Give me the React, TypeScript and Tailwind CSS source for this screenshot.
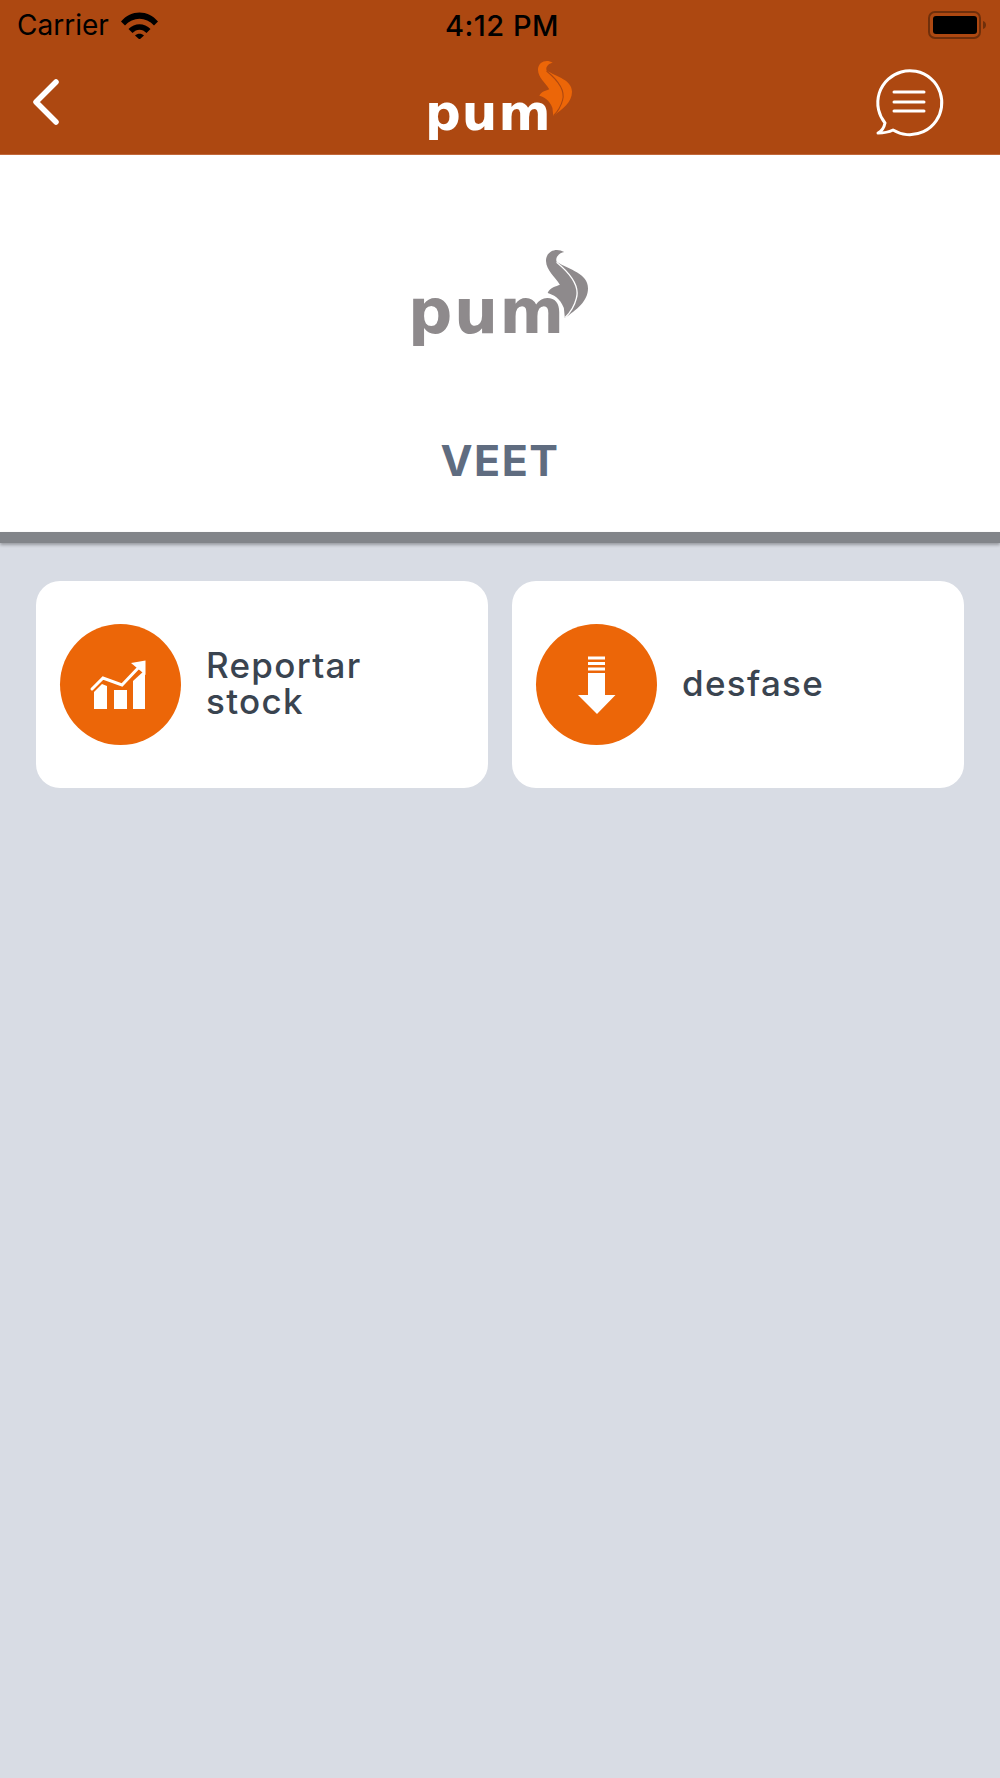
import React from "react";

function Flame({ className, line }: { className: string; line: string }) {
  return (
    <svg viewBox="498 60 127 205" className={className}>
      <path
        d="M553 66C530 52 500 62 498 90C497 120 525 140 540 165C530 170 510 172 503 190C520 195 540 205 552 235L555 265C590 240 625 215 625 175C625 130 570 120 530 95C525 80 540 68 553 66Z"
        fill="currentColor"
      />
      <path d="M530 97C570 130 600 170 590 205C585 225 570 250 556 264" fill="none" stroke={line} strokeWidth="4" />
    </svg>
  );
}

function StatusBar() {
  return (
    <div className="flex h-[50px] items-center justify-between pl-[17px] pr-[13px] text-black">
      <div className="flex w-[200px] items-center gap-[12px]">
        <span className="text-[28px] leading-none">Carrier</span>
        <svg viewBox="0 0 37 27" className="h-[27px] w-[37px] shrink-0">
          <path d="M0 9.5C10-2.5 27-2.5 37 9.5L33 13.5C25 4.5 12 4.5 4 13.5Z" fill="black" />
          <path d="M7.5 17C13.500 10.500 23.500 10.500 29.500 17L25.500 21C21.500 16.500 15.500 16.500 11.500 21Z" fill="black" />
          <path d="M14 23.500C16.500 21 20.500 21 23 23.500L18.500 27.500Z" fill="black" />
        </svg>
      </div>
      <span className="text-[29px] font-medium leading-none tracking-[0.5px]">4:12 PM</span>
      <div className="flex w-[200px] justify-end">
        <svg viewBox="0 0 59 28" className="h-[28px] w-[59px]">
          <rect x="1" y="1" width="51" height="26" rx="6" fill="none" stroke="#6f2f0b" strokeWidth="2" />
          <rect x="5" y="5" width="44" height="18" rx="3" fill="black" />
          <path d="M55 10C57.500 11 58 12.500 58 14C58 15.500 57.500 17 55 18Z" fill="#6f2f0b" />
        </svg>
      </div>
    </div>
  );
}

function NavBar() {
  return (
    <div className="flex h-[104px] items-start justify-between">
      <div className="w-[130px] pl-[32px] pt-[29px]">
        <svg viewBox="0 0 27 46" className="h-[46px] w-[27px]">
          <path d="M24 3L4 23L24 43" fill="none" stroke="white" strokeWidth="5.500" strokeLinecap="round" strokeLinejoin="round" />
        </svg>
      </div>
      <div className="relative mt-[10px] h-[90px] w-[144px] pt-[23px]">
        <span className="-ml-[3px] block font-['DejaVu_Sans',sans-serif] text-[50px] font-bold leading-[60px] tracking-[1px] text-white">
          pum
        </span>
        <Flame className="absolute left-[110px] top-0 h-[57px] w-[34px] text-[#ec6608]" line="#ad4811" />
      </div>
      <div className="flex w-[130px] justify-end pr-[55px] pt-[17px]">
        <svg viewBox="875 67 70 70" className="h-[70px] w-[70px] shrink-0">
          <path
            d="M885 123A32 32 0 1 1 893 130C889 132 884 133 878 133C882 131 884 128 885 123Z"
            fill="none"
            stroke="white"
            strokeWidth="3"
            strokeLinejoin="round"
          />
          <path d="M894 92H924M894 102H924M894 111H924" stroke="white" strokeWidth="3" strokeLinecap="round" />
        </svg>
      </div>
    </div>
  );
}

function ChartIcon() {
  return (
    <svg viewBox="60 624 121 121" className="h-full w-full">
      <path d="M94 692L102 684L107 686V709H94Z" fill="white" />
      <rect x="114" y="690" width="13" height="19" fill="white" />
      <path d="M133 681L145 670V709H133Z" fill="white" />
      <path d="M92 689L103 678L122 685L141 665" fill="none" stroke="white" strokeWidth="3" strokeLinecap="round" />
      <path d="M131 663L145.500 660.500V675Z" fill="white" />
    </svg>
  );
}

function ArrowIcon() {
  return (
    <svg viewBox="536 624 121 121" className="h-full w-full">
      <rect x="588" y="656.500" width="17" height="3" fill="white" />
      <rect x="588" y="662" width="17" height="3" fill="white" />
      <rect x="588" y="667.500" width="17" height="3" fill="white" />
      <path d="M588 673H605V695H615.500L597 714L578 695H588Z" fill="white" />
    </svg>
  );
}

function ActionCard({ icon, label }: { icon: React.ReactNode; label: React.ReactNode }) {
  return (
    <div className="flex h-[207px] items-center gap-[25px] rounded-[24px] bg-white pl-[24px]">
      <div className="h-[121px] w-[121px] shrink-0 rounded-full bg-[#ec6608]">{icon}</div>
      <span className="pb-[3px] text-[35px] font-medium leading-[36px] tracking-[1.3px] text-[#3a4450]">{label}</span>
    </div>
  );
}

export default function App() {
  return (
    <div className="flex min-h-[1778px] flex-col bg-[#d8dce4] font-['Inter',sans-serif]">
      <header className="h-[155px] border-b border-[#c2683a] bg-[#ad4811]">
        <StatusBar />
        <NavBar />
      </header>

      <section className="flex h-[377px] flex-col items-center bg-white">
        <div className="relative mt-[95px] h-[100px] w-[176px] pt-[28px]">
          <span className="-ml-[4px] block font-['DejaVu_Sans',sans-serif] text-[62px] font-bold leading-[68px] tracking-[1.5px] text-[#8e8a8c]">
            pum
          </span>
          <Flame className="absolute left-[134px] top-0 h-[68px] w-[42px] text-[#8e8a8c]" line="white" />
        </div>
        <span className="mt-[85px] text-[43px] font-bold leading-[50px] tracking-[1.5px] text-[#5f6c80]">VEET</span>
      </section>
      <div className="h-[11px] bg-[#82858a] shadow-[0_2px_3px_rgba(0,0,0,0.3)]" />

      <main className="grid grid-cols-2 gap-[24px] px-[36px] pt-[38px]">
        <ActionCard
          icon={<ChartIcon />}
          label={
            <>
              Reportar
              <br />
              stock
            </>
          }
        />
        <ActionCard icon={<ArrowIcon />} label="desfase" />
      </main>
    </div>
  );
}
